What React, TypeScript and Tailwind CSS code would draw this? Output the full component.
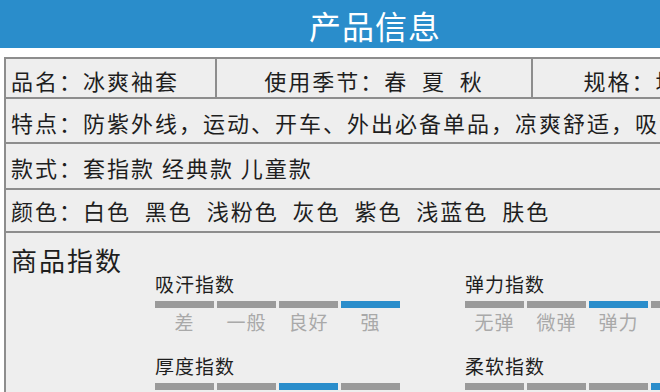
const cjk = "font-['Noto_Sans_CJK_SC','Noto_Sans',sans-serif]"

type Index = { title: string; labels: string[]; active: number }

const indices: Index[] = [
  { title: '吸汗指数', labels: ['差', '一般', '良好', '强'], active: 3 },
  { title: '弹力指数', labels: ['无弹', '微弹', '弹力', '超弹'], active: 2 },
  { title: '厚度指数', labels: ['薄', '适中', '偏厚', '厚'], active: 2 },
  { title: '柔软指数', labels: ['偏硬', '适中', '柔软', '超柔'], active: 3 },
]

export default function App() {
  return (
    <div className={`w-[660px] h-[392px] overflow-hidden bg-white ${cjk}`}>
      <div className="w-[750px]">
        {/* header */}
        <div className="h-[48px] bg-[#2a8dcb] text-white text-[32px] leading-none tracking-[1px] flex items-center justify-center pt-[2px]">
          产品信息
        </div>

        {/* table */}
        <div className="mt-[9px] mx-[4px] border-2 border-[#8d8d8d] bg-[#eeeeee] text-[#1e1e1e] text-[22px] tracking-[2px]">
          <div className="flex h-[40px] border-b-2 border-[#8d8d8d]">
            <div className="w-[211px] shrink-0 border-r-2 border-[#8d8d8d] pl-[5px] flex items-center pt-[4px]">
              品名：冰爽袖套
            </div>
            <div className="w-[316px] shrink-0 border-r-2 border-[#8d8d8d] flex items-center justify-center whitespace-pre pt-[4px]">
              使用季节：春  夏  秋
            </div>
            <div className="flex-1 flex items-center justify-center pl-[10px] pt-[4px] whitespace-nowrap">规格：均码</div>
          </div>
          <div className="h-[45px] border-b-2 border-[#8d8d8d] pl-[5px] flex items-center pt-[4px] whitespace-nowrap">
            特点：防紫外线，运动、开车、外出必备单品，凉爽舒适，吸汗透气
          </div>
          <div className="h-[46px] border-b-2 border-[#8d8d8d] pl-[5px] flex items-center pt-[3px] whitespace-pre">
            款式：套指款 经典款 儿童款
          </div>
          <div className="h-[43px] border-b-2 border-[#8d8d8d] pl-[5px] flex items-center whitespace-pre">
            颜色：白色  黑色  浅粉色  灰色  紫色  浅蓝色  肤色
          </div>

          {/* product index */}
          <div className="flex h-[200px]">
            <div className="w-[149px] shrink-0 pl-[5px] pt-[10px] text-[26px] leading-[34px] tracking-[2px]">商品指数</div>
            <div className="grid shrink-0 grid-cols-[310px_310px] gap-y-[19px] pt-[38px] content-start">
              {indices.map((it) => (
                <IndexBlock key={it.title} item={it} />
              ))}
            </div>
          </div>
        </div>
      </div>
    </div>
  )
}

function IndexBlock({ item }: { item: Index }) {
  return (
    <div>
      <p className="text-[19px] leading-[26px] tracking-[1px] text-[#1e1e1e]">{item.title}</p>
      <div className="mt-[4px] flex gap-[3px]">
        {item.labels.map((l, i) => (
          <div
            key={l}
            className={['w-[59px] h-[7px] shrink-0', i === item.active ? 'bg-[#2a8dcb]' : 'bg-[#9a9a9a]'].join(' ')}
          />
        ))}
      </div>
      <div className="mt-[2px] flex gap-[3px]">
        {item.labels.map((l) => (
          <span key={l} className="w-[59px] shrink-0 text-center text-[19px] leading-[24px] tracking-[1px] text-[#a9a9a9]">
            {l}
          </span>
        ))}
      </div>
    </div>
  )
}
